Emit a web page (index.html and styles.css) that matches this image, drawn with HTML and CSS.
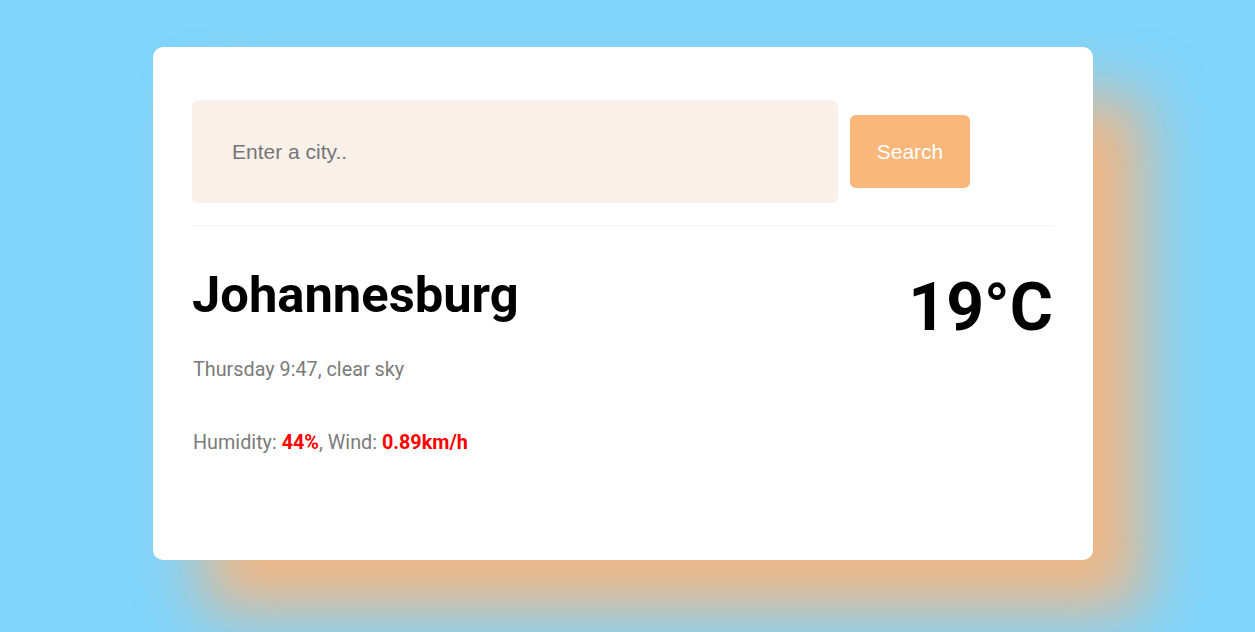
FILE: index.html
```html
<!DOCTYPE html>
<html lang="en">
<head>
<meta charset="utf-8">
<title>Weather</title>
<link rel="stylesheet" href="styles.css">
</head>
<body>
<div class="page">
  <div class="card">
    <form class="search-form">
      <input class="search-input" type="search" placeholder="Enter a city..">
      <button class="search-btn" type="submit">Search</button>
    </form>
    <hr class="divider">
    <div class="weather">
      <div class="info">
        <h1 class="city">Johannesburg</h1>
        <p class="desc">Thursday 9:47, clear sky</p>
        <p class="stats">Humidity: <strong class="val">44%</strong>, Wind: <strong class="val">0.89km/h</strong></p>
      </div>
      <div class="temp">19°C</div>
    </div>
  </div>
</div>
</body>
</html>
```
FILE: styles.css
```css
* { box-sizing: border-box; }
html, body { margin: 0; height: 100%; }
body {
  background: #81d4fa;
  font-family: Roboto, "Liberation Sans", sans-serif;
  overflow: hidden;
}
.page {
  display: flex;
  justify-content: center;
  padding: 47px 9px 0 0;
}
.card {
  width: 940px;
  height: 513px;
  background: #fff;
  border-radius: 10px;
  padding: 53px 39px 0 39px;
  box-shadow: 50px 50px 62px rgba(243, 181, 128, 0.97);
}
.search-form {
  display: flex;
  align-items: center;
  margin: 0;
}
.search-input {
  width: 646px;
  height: 103px;
  padding: 40px;
  border: none;
  border-radius: 6px;
  background: #faf0ea;
  font-family: "Liberation Sans", Arial, sans-serif;
  font-size: 21px;
  line-height: 23px;
  color: #333;
  outline: none;
}
.search-input::placeholder { color: #757575; }
.search-btn {
  margin-left: 12px;
  width: 120px;
  height: 73px;
  border: none;
  border-radius: 6px;
  background: #f9b77c;
  color: #fff;
  font-family: "Liberation Sans", Arial, sans-serif;
  font-size: 21px;
  padding: 0;
}
.divider {
  margin: 22px 0 0 0;
  border: none;
  border-top: 1px solid #f3f3f3;
  height: 0;
}
.weather {
  display: flex;
  justify-content: space-between;
  align-items: flex-start;
  margin-top: 39px;
}
.city {
  margin: 0;
  font-size: 50.7px;
  line-height: 60px;
  font-weight: 700;
  color: #000;
}
.desc {
  margin: 33px 0 0 1px;
  font-size: 19.8px;
  line-height: 23px;
  color: #7b7b7b;
}
.stats {
  margin: 50px 0 0 1px;
  font-size: 19.8px;
  line-height: 23px;
  color: #7b7b7b;
}
.val { color: #ff0000; font-weight: 700; }
.temp {
  margin-top: 4px;
  font-size: 66px;
  line-height: 77px;
  font-weight: 700;
  color: #000;
  margin-right: 1px;
}
```
